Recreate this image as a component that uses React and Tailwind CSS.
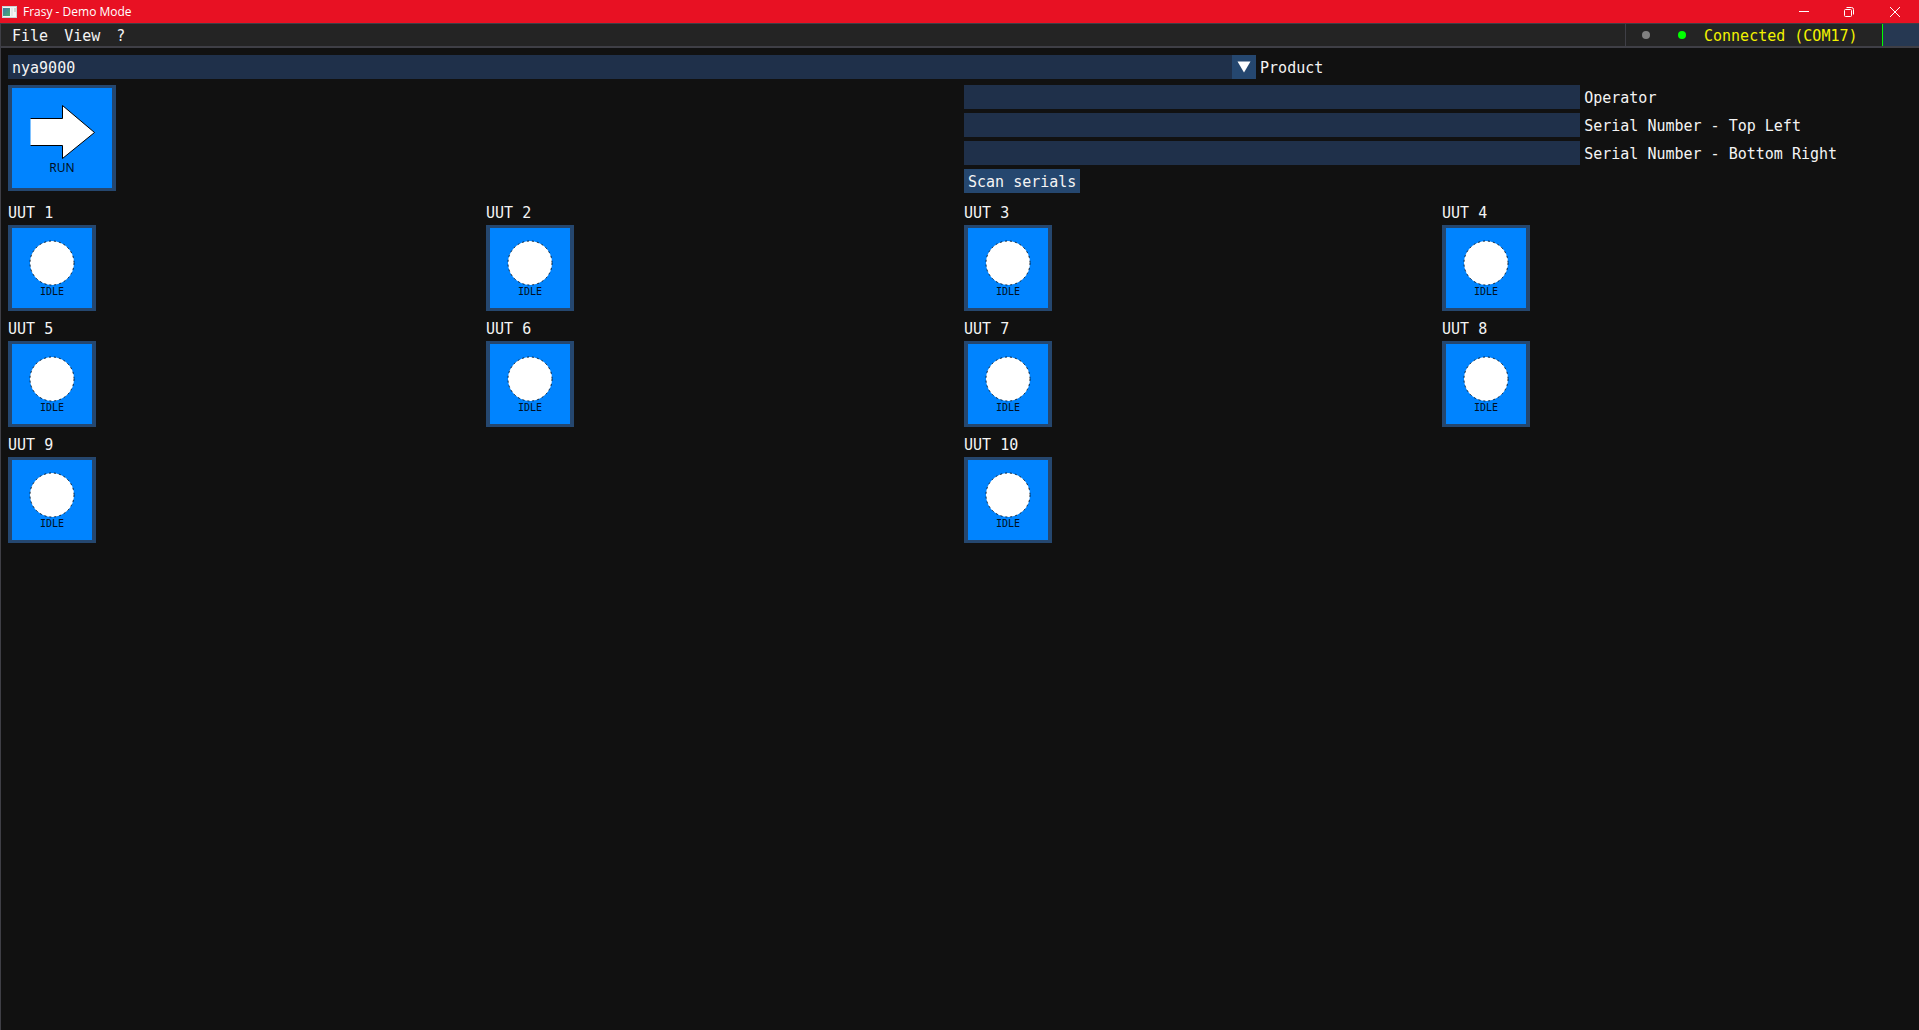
const serialFields = [
  { id: "operator", label: "Operator" },
  { id: "serial-top-left", label: "Serial Number - Top Left" },
  { id: "serial-bottom-right", label: "Serial Number - Bottom Right" },
];

const units = [
  { n: 1, cell: "col-start-1" },
  { n: 2, cell: "col-start-2" },
  { n: 3, cell: "col-start-3" },
  { n: 4, cell: "col-start-4" },
  { n: 5, cell: "col-start-1" },
  { n: 6, cell: "col-start-2" },
  { n: 7, cell: "col-start-3" },
  { n: 8, cell: "col-start-4" },
  { n: 9, cell: "col-start-1" },
  { n: 10, cell: "col-start-3" },
];

function TitleBar() {
  return (
    <header className="flex h-[23px] items-center bg-[#e81123] pr-px text-white">
      <svg className="ml-0.5 h-3 w-[15px]" viewBox="0 0 15 12" aria-hidden="true">
        <defs>
          <linearGradient id="appIcon" x1="0" y1="0" x2="1" y2="1">
            <stop offset="0" stopColor="#3f78a8" />
            <stop offset="1" stopColor="#4fae6c" />
          </linearGradient>
        </defs>
        <rect width="15" height="12" fill="#c9d3d6" />
        <rect x="1" y="1" width="13" height="10" fill="#f4f4f4" />
        <rect x="1" y="2" width="7" height="8" fill="url(#appIcon)" />
        <rect x="9" y="2" width="2" height="8" fill="#e4e8e8" />
        <rect x="12" y="2" width="2" height="4" fill="#d0d8d6" />
      </svg>
      <h1 className="ml-1.5 font-['Open_Sans','Noto_Sans',sans-serif] text-[12px] leading-4">Frasy - Demo Mode</h1>
      <div className="ml-auto flex h-full">
        <button type="button" aria-label="Minimize" className="flex w-[45px] items-center justify-center">
          <svg width="10" height="10" viewBox="0 0 10 10" stroke="white" fill="none"><path d="M0 4.5H10" /></svg>
        </button>
        <button type="button" aria-label="Restore" className="flex w-[46px] items-center justify-center">
          <svg width="10" height="10" viewBox="0 0 10 10" stroke="white" fill="none">
            <rect x="0.5" y="2.5" width="7" height="7" rx="1" />
            <path d="M2.5 0.5H7.5Q9.5 0.5 9.5 2.5V7.5" />
          </svg>
        </button>
        <button type="button" aria-label="Close" className="flex w-[46px] items-center justify-center">
          <svg width="10" height="10" viewBox="0 0 10 10" stroke="white" fill="none"><path d="M0 0L10 10M10 0L0 10" /></svg>
        </button>
      </div>
    </header>
  );
}

function MenuBar() {
  return (
    <nav className="flex h-[25px] border-t border-b-2 border-[#3f3f46] bg-[#242424]">
      <div className="flex items-center gap-4 pt-0.5 pl-[11px]">
        <button type="button">File</button>
        <button type="button">View</button>
        <button type="button">?</button>
      </div>
      <div className="ml-auto flex items-center border-l border-[#3f3f46]">
        <span className="ml-4 size-2 rounded-full bg-[#808080]" />
        <span className="ml-7 size-2 rounded-full bg-[#00ff00]" />
        <span className="ml-[18px] w-[178px] pt-0.5 text-[#f2f200]">Connected (COM17)</span>
        <span className="h-full w-[37px] border-l border-[#00ff00] bg-[#263852]" />
      </div>
    </nav>
  );
}

function ProductSelect() {
  return (
    <div className="flex items-center gap-1">
      <div className="relative w-[65.55%]">
        <select
          id="product"
          defaultValue="nya9000"
          className="block h-6 w-full appearance-none bg-[#1f304a] pt-0.5 pl-1 leading-[22px] text-[#f4f4f4] outline-none"
        >
          <option value="nya9000">nya9000</option>
        </select>
        <span className="pointer-events-none absolute inset-y-0 right-0 flex w-6 items-center justify-center bg-[#25476f]">
          <svg width="14" height="12" viewBox="0 0 14 12" fill="white" aria-hidden="true"><path d="M0.5 0.5H13.5L7 11.5Z" /></svg>
        </span>
      </div>
      <label htmlFor="product" className="pt-0.5">Product</label>
    </div>
  );
}

function RunButton() {
  return (
    <button type="button" className="block border-x-4 border-y-3 border-[#25476f] bg-[#0084ff]">
      <span className="flex size-[100px] flex-col items-center">
        <svg width="100" height="74" viewBox="0 0 100 74" aria-hidden="true">
          <path d="M18.5 30.5H50.5V17.5L82.5 44.5L50.5 70.5V57.5H18.5Z" fill="white" />
          <path d="M18.5 30.5H50.5V17.5L82.5 44.5L50.5 70.5V57.5H18.5" fill="none" stroke="black" />
        </svg>
        <span className="font-['Noto_Sans','Open_Sans',sans-serif] text-[12px] leading-3 text-[#001022]">RUN</span>
      </span>
    </button>
  );
}

function Unit({ n, cell }) {
  return (
    <section className={cell}>
      <h2 className="mb-px pt-0.5 leading-[22px]">UUT {n}</h2>
      <button type="button" aria-label={`UUT ${n} idle`} className="block border-x-4 border-y-3 border-[#25476f] bg-[#0084ff]">
        <span className="flex size-20 flex-col items-center">
          <svg width="80" height="58" viewBox="0 0 80 58" aria-hidden="true">
            <circle cx="40" cy="35" r="22" fill="white" />
            <circle cx="40" cy="35" r="22" fill="none" stroke="black" strokeWidth="0.8" strokeDasharray="2 3" />
          </svg>
          <span className="text-[10px] leading-3 text-[#001022]">IDLE</span>
        </span>
      </button>
    </section>
  );
}

export default function App() {
  return (
    <div className="flex min-h-screen flex-col bg-[#111111] font-['DejaVu_Sans_Mono','Liberation_Mono',monospace] text-[15px] leading-5 text-[#f4f4f4]">
      <TitleBar />
      <div className="flex grow flex-col border-l border-[#3f3f46]">
        <MenuBar />
        <main className="pt-[7px] pr-[7px] pl-[7px]">
          <ProductSelect />
          <div className="mt-1.5 grid grid-cols-2 gap-x-2">
            <div>
              <RunButton />
            </div>
            <form className="flex flex-col gap-1">
              {serialFields.map((field) => (
                <div key={field.id} className="flex items-center gap-1">
                  <input id={field.id} type="text" className="h-6 w-[65%] bg-[#1f304a] px-1 outline-none" />
                  <label htmlFor={field.id} className="pt-0.5">{field.label}</label>
                </div>
              ))}
              <button type="button" className="h-6 self-start bg-[#25476f] px-1 pt-0.5">Scan serials</button>
            </form>
          </div>
          <div className="mt-[7px] grid grid-cols-4 gap-x-2 gap-y-[5px]">
            {units.map((unit) => (
              <Unit key={unit.n} {...unit} />
            ))}
          </div>
        </main>
      </div>
    </div>
  );
}
